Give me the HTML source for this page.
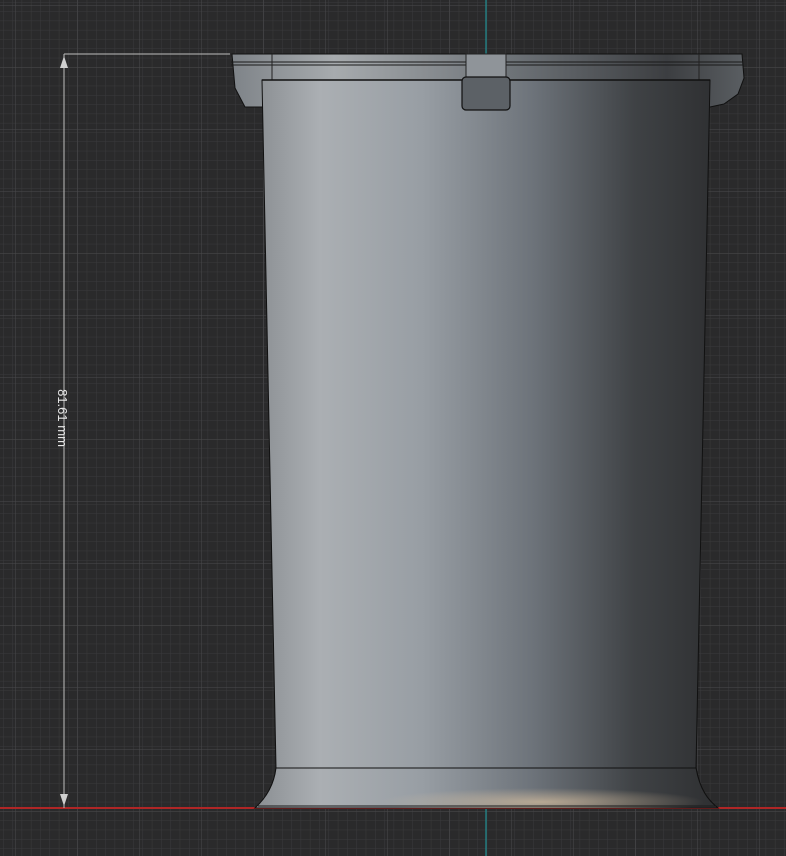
<!DOCTYPE html>
<html><head><meta charset="utf-8"><style>
html,body{margin:0;padding:0;background:#2a2a2b;width:786px;height:856px;overflow:hidden}
</style></head><body>
<svg width="786" height="856" viewBox="0 0 786 856" xmlns="http://www.w3.org/2000/svg">
<defs>
<pattern id="minor" width="9.3" height="9.3" patternUnits="userSpaceOnUse" x="3" y="2">
<path d="M0 0H9.3M0 0V9.3" stroke="#3a3a3c" stroke-width="1" fill="none"/>
</pattern>
<pattern id="major" width="62" height="62" patternUnits="userSpaceOnUse" x="15" y="5">
<path d="M0 0H62M0 0V62" stroke="#4a4a4c" stroke-width="1" fill="none"/>
</pattern>
<linearGradient id="body" x1="0" x2="1" y1="0" y2="0">
<stop offset="0" stop-color="#8a8e92"/>
<stop offset="0.14" stop-color="#abafb3"/>
<stop offset="0.36" stop-color="#989ea4"/>
<stop offset="0.6" stop-color="#6d737a"/>
<stop offset="0.82" stop-color="#3f4245"/>
<stop offset="1" stop-color="#2e2f31"/>
</linearGradient>
<linearGradient id="rim" x1="0" x2="1" y1="0" y2="0">
<stop offset="0" stop-color="#7e8388"/>
<stop offset="0.2" stop-color="#a7abae"/>
<stop offset="0.55" stop-color="#6d7277"/>
<stop offset="0.85" stop-color="#3c3e41"/>
<stop offset="1" stop-color="#5a5e62"/>
</linearGradient>
<radialGradient id="glow" cx="0.62" cy="0.85" r="0.35">
<stop offset="0" stop-color="#d8c0a0" stop-opacity="0.7"/>
<stop offset="1" stop-color="#d8c0a0" stop-opacity="0"/>
</radialGradient>
</defs>
<rect width="786" height="856" fill="#2a2a2b"/>
<rect width="786" height="856" fill="url(#minor)"/>
<rect width="786" height="856" fill="url(#major)"/>
<line x1="486" y1="0" x2="486" y2="856" stroke="#1f8f93" stroke-width="1.2"/>
<line x1="0" y1="808" x2="786" y2="808" stroke="#b02626" stroke-width="2"/>
<line x1="64" y1="54" x2="230" y2="54" stroke="#bdbdbd" stroke-width="1"/>
<line x1="64" y1="54" x2="64" y2="808" stroke="#bdbdbd" stroke-width="1"/>
<polygon points="64,56 60,68 68,68" fill="#cfcfcf"/>
<polygon points="64,806 60,794 68,794" fill="#cfcfcf"/>
<text x="0" y="0" transform="translate(58,418) rotate(90)" text-anchor="middle" font-family="Liberation Sans, sans-serif" font-size="13" fill="#e6e6e6">81.61 mm</text>
<path d="M232 54 H742 L744 78 L738 94 L724 104 L710 107 H262 L245 107 L235 88 Z" fill="url(#rim)" stroke="#111" stroke-width="1"/>
<line x1="231" y1="62" x2="743" y2="62" stroke="#1a1a1a" stroke-width="1"/>
<line x1="231" y1="65" x2="743" y2="65" stroke="#1a1a1a" stroke-width="1"/>
<line x1="272" y1="54" x2="272" y2="80" stroke="#222" stroke-width="1"/>
<line x1="699" y1="54" x2="699" y2="80" stroke="#222" stroke-width="1"/>
<path d="M262 80 H710 L696 768 C700 790 708 800 718 808 H255 C266 798 274 785 276 768 Z" fill="url(#body)" stroke="#111" stroke-width="1"/>
<path d="M276 768 H696 C700 790 708 800 718 808 H255 C266 798 274 785 276 768 Z" fill="url(#body)" stroke="#111" stroke-width="1"/>
<path d="M276 768 H696 C700 790 708 800 718 808 H255 C266 798 274 785 276 768 Z" fill="url(#glow)"/>
<line x1="258" y1="806" x2="716" y2="806" stroke="#1a1a1a" stroke-width="1"/>
<line x1="262" y1="80" x2="710" y2="80" stroke="#111" stroke-width="1.5"/>
<rect x="466" y="54" width="40" height="26" fill="#8f9499" stroke="#222" stroke-width="1"/>
<rect x="462" y="77" width="48" height="33" rx="4" fill="#5c6166" stroke="#111" stroke-width="1.2"/>
</svg>
</body></html>
